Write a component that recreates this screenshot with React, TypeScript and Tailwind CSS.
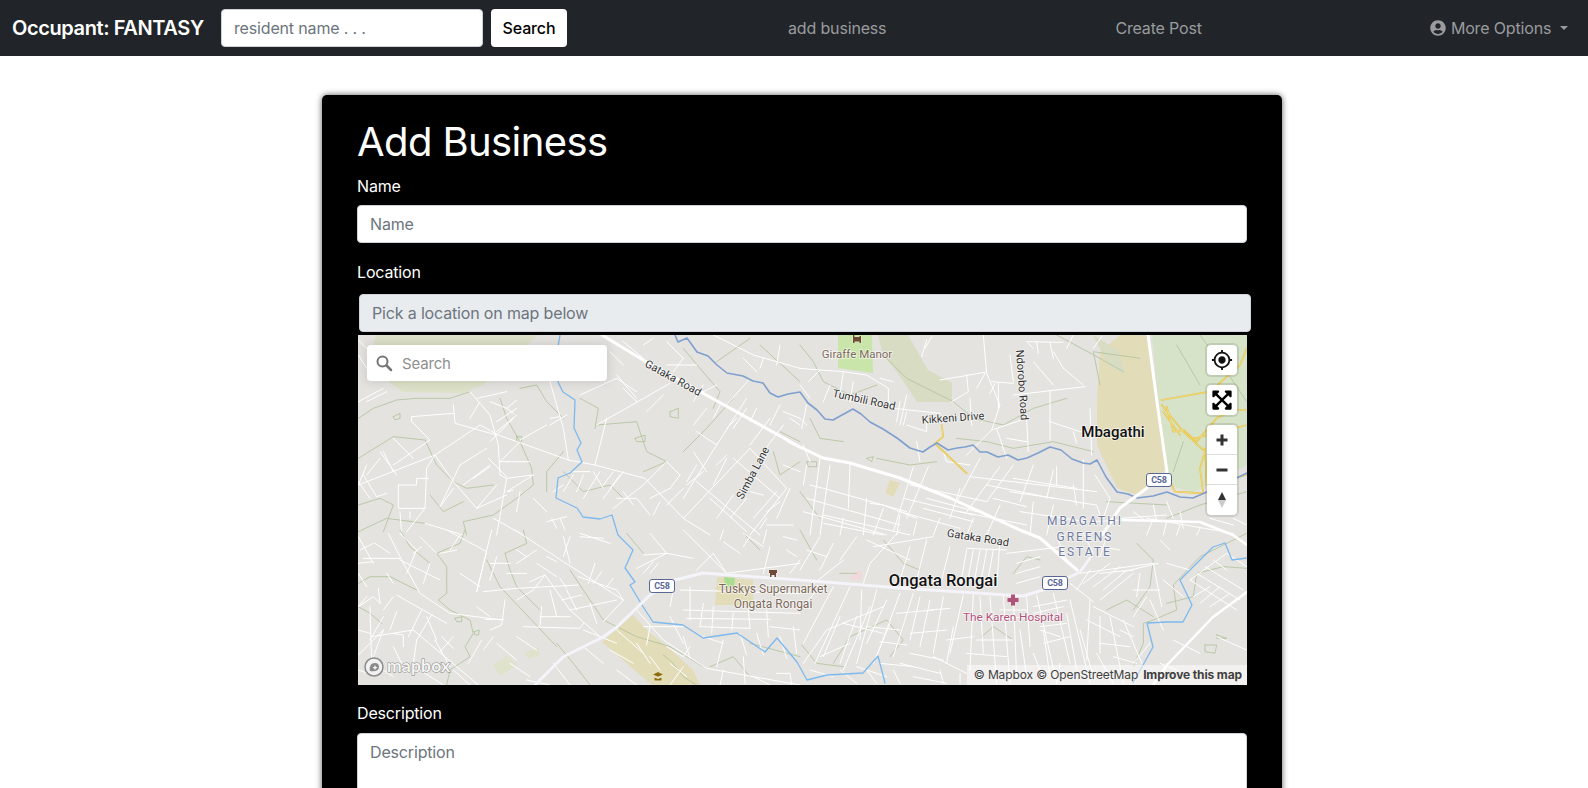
import { FaExpandArrowsAlt, FaUserCircle } from "react-icons/fa";
import { MdMyLocation } from "react-icons/md";

const q1Streets = ["25,600 255,510 390,420 445,450 655,525 735,540 885,580 1000,700 1080,750","310,360 315,415 440,450","185,395 310,385","185,395 185,410 240,465 130,540","360,320 420,390 445,480 450,570 470,580 550,570","470,580 440,750","340,600 420,540","330,540 410,490","370,580 420,545","415,520 470,575","600,290 640,430 655,525","735,540 770,400","740,420 960,295","690,330 800,280 860,320","820,310 860,350","800,270 860,340","1040,440 1100,480 1190,340","1100,480 1000,640","1130,520 1090,600","1000,700 1200,490 1310,610 1200,750","1040,590 1230,750","1080,640 1190,740","1150,520 1290,640","1090,150 1210,210 1350,250","1290,180 1280,240","1240,220 1230,250","1180,220 1220,260","90,500 140,570","130,460 190,520","40,570 80,635 110,625","145,600 145,670 225,670 230,550","145,600 200,600 200,580 235,580","25,350 100,310","50,350 110,320","225,715 340,750","430,700 520,750","550,640 590,680","590,710 650,695","605,700 620,730","630,700 645,735","700,640 750,560","760,600 790,560","780,610 810,570","800,640 860,640 900,690","820,620 850,660","790,670 880,600","600,420 650,390","510,465 590,420","450,530 540,530","475,620 490,615","270,665 330,540","275,660 310,610","150,680 155,750","180,680 180,700","25,165 60,200","25,210 50,250","880,180 910,160","780,200 820,240","950,240 1040,240","1040,330 1100,300","1030,420 1070,370","1190,370 1150,430","1220,370 1200,410","1290,360 1260,420","1320,400 1350,420","470,370 500,345","440,410 500,370","600,400 630,395","660,260 700,200","1100,540 1130,510","1200,620 1240,630","1250,680 1290,650",
"25,600 50,540","50,570 90,520","100,500 130,560","25,590 60,640","225,670 170,740","230,550 255,510","255,510 310,590","310,590 380,670 440,600","380,670 470,630","470,620 550,570","450,530 510,470","420,470 490,400","440,440 500,390","360,400 390,350","380,340 470,320","420,350 470,370","470,370 490,385","510,620 500,680","610,620 640,600","670,570 640,620","660,560 720,560","700,570 680,620","730,560 760,610","820,560 760,640","880,600 950,530","950,530 990,570","990,570 960,610","900,640 960,610","910,690 930,650","950,660 1000,610","1010,600 1060,560","1070,560 1030,500","1040,540 1010,590","1130,430 1160,400","1090,400 1110,360","1030,350 1060,300","1130,360 1200,280","1300,380 1350,400","1240,500 1300,420","1200,480 1260,400","1310,470 1350,490","1300,540 1350,560","1320,610 1280,700","1250,720 1330,720","1100,700 1150,630","1140,700 1190,640","1210,700 1280,620","1230,730 1250,700","890,380 940,330","700,200 740,240","950,170 1000,220","1000,220 970,260","820,170 880,220"];
const q1Contours = ["25,400 70,370 140,345 200,340 300,340 360,320","25,520 130,455 225,465 260,540 310,590 350,610 430,600","450,340 470,400 510,470 545,550 550,600 500,640 430,690 340,710 350,750","510,310 560,300 590,350 640,400","690,340 745,370 735,430","740,420 860,410 890,500 950,530 880,560","25,740 110,700 225,715","1000,190 1050,250 1110,320 1090,370","1200,160 1100,230","1230,180 1350,290","1270,500 1290,570 1350,530","1150,340 1070,430 1000,500","640,560 700,620 780,600 820,640","960,380 985,370 985,400 960,395 960,380","855,460 885,450 885,470 860,470 855,460","130,395 150,385 150,400 135,405 130,395","25,660 90,640 130,660 100,740","240,630 280,680 340,650","590,620 590,560 640,500","500,455 515,455 515,470 500,470 500,455","1290,440 1350,470"];

const q2Streets = ["0,250 60,255 130,260 200,270 265,310 265,350 280,370 420,385","550,150 560,265 600,360 575,435 500,510","420,285 555,262","500,270 505,320 455,350","575,290 640,295","595,295 595,370","530,310 555,265","570,325 585,295","640,330 855,305","750,318 750,465","510,340 515,420","680,405 685,500","575,435 680,400","750,410 840,440 870,435","820,440 830,475","870,370 875,510","380,165 365,215","395,155 375,190","680,170 790,172","710,172 715,205","750,172 760,220","685,175 700,190","880,190 905,155","510,575 890,620","340,545 280,740","385,545 320,700","480,610 450,700","540,520 470,650","600,545 500,680","640,540 560,650","700,540 660,650","760,555 740,640","770,545 770,600","850,525 850,670","820,600 830,660","60,520 30,750","90,540 60,750","20,540 10,600","150,540 145,670","70,690 330,750","70,715 250,750","210,655 250,660 350,700","380,640 530,680","370,670 520,710","580,640 680,665","820,650 890,660 900,690","885,570 930,640 910,700","300,350 290,410","320,330 300,420","20,360 5,430","240,280 280,290","1040,700 1300,745","1060,660 1070,710","1100,650 1120,700","1140,680 1150,730",
"30,600 70,610 320,680","20,640 300,720","10,680 260,750","330,600 560,650","310,640 520,690","300,680 480,730","480,680 680,720","560,600 760,640","640,580 830,610","630,620 830,650","660,680 860,710","700,650 690,750","760,660 740,750","600,660 560,750","520,700 500,750","420,700 400,750","350,710 340,750","200,640 190,750","250,670 220,750","300,690 290,750","130,700 120,750","0,300 30,340","25,290 60,255","130,260 120,330","160,290 150,350","70,350 90,300","0,400 20,420","320,380 310,420","320,420 380,440 380,390","10,480 30,530","350,470 360,530","430,500 440,530","440,530 510,540","590,430 620,520","620,460 680,470","760,200 790,250","700,230 760,300","790,250 850,300","630,210 640,290","820,150 800,190","960,700 1100,690","880,710 970,705","1000,680 1040,710","1230,700 1300,720","1300,700 1340,720","1060,700 1040,750","1100,710 1090,750","1140,720 1130,750","1200,730 1190,750"];
const q2Contours = ["0,180 40,230 70,290 150,330 230,300","250,210 320,280 420,330 460,350 520,400 610,420 700,370 800,340","470,460 560,470 640,490 760,470 880,500","410,530 330,540 230,520","900,300 880,200 1020,220","770,150 900,220 970,260","1200,150 1280,260 1340,350","1100,700 1200,660 1340,620","920,650 1100,660","0,620 60,700","30,400 60,460 130,470","200,520 220,515 215,530 200,520","20,530 50,530 50,545 25,545 20,530","1130,180 1200,300","1150,470 1120,560"];
const q2Yellow = ["425,420 430,455 405,475 500,565","1085,345 1230,320 1320,240 1340,190","1085,360 1150,440 1215,500 1200,550 1210,625 1125,620 1110,590","1100,365 1120,440 1150,435 1190,470 1250,400 1300,375 1340,375","1185,460 1340,420","1215,490 1220,600 1340,570","1090,380 1140,450"];

const q3Streets = ["25,20 70,100","115,10 155,90 210,190 300,250 455,270","150,90 270,150","290,0 410,65 380,185","425,0 380,185","495,0 640,95 820,210 760,275","400,185 500,175 685,165","500,210 550,180 585,135 660,240 750,320","540,155 585,135","465,210 455,285 420,300","405,268 460,268","520,290 690,295 700,280","575,230 570,290","570,260 660,260","660,240 800,210","635,210 695,195","630,145 650,175","685,140 800,180 820,210","735,100 715,160","755,125 730,160","790,145 770,170","640,20 660,100","660,20 640,80","690,10 780,40","690,20 760,25","590,80 620,95","140,195 290,280","215,240 175,320","245,255 200,330 190,400","65,320 190,300","25,230 70,200 90,220","85,175 90,220","60,230 65,400","125,310 160,315 160,350","20,380 100,300","190,300 385,465","310,320 270,365","275,320 310,355","395,330 355,400","430,320 400,360","530,450 600,465","610,400 660,465","40,85 150,85","25,100 70,95","900,10 950,70 1030,85","880,75 950,70","860,115 950,70","880,130 910,95","900,130 925,100","1000,0 1130,130","1120,35 1170,70","1090,70 1130,130 1350,100","1200,20 1180,50","1260,50 1240,130","1300,20 1340,30","970,180 960,230","990,180 1350,190","1020,170 1020,270","1060,220 1050,290","1000,240 1350,250","1010,265 1260,268","1050,290 1200,295","1090,230 1085,310","1150,250 1145,300","1195,240 1200,295","1250,240 1255,320","1260,290 1350,300","860,240 940,330 1070,415 1350,465","1180,380 1185,460","950,350 1000,380 1020,350","1280,430 1320,430 1325,465","1000,320 1020,385","240,100 220,160","190,70 215,50","330,130 390,170","1180,10 1240,50","75,40 120,70",
"25,130 50,170","30,60 70,40","110,130 130,160","50,200 25,230","100,240 130,200","100,260 60,330","140,245 120,300","25,300 60,310","25,420 55,430","100,300 70,380","130,350 170,430","70,400 130,440","230,260 260,330","255,330 300,410","310,420 360,465","210,420 280,465","150,10 200,60","200,60 170,130","210,20 260,70","330,15 300,60","440,80 420,150","500,100 560,60","500,60 530,80","560,100 620,140","380,230 420,260","420,100 480,100","470,130 530,130","600,180 620,260","650,180 680,240","720,220 740,280","700,300 800,340","800,300 880,370","880,290 1000,290","900,290 890,345","960,260 1000,340","1060,320 1120,340","1120,330 1100,410","1170,310 1190,375","1220,310 1240,375","1290,320 1310,385","1330,290 1340,370","1120,0 1110,30","1250,0 1240,40","1310,60 1340,80","1000,410 960,465","1120,420 1110,465","1210,440 1260,465","860,340 900,400","780,360 850,400","700,350 760,400","800,420 860,465","900,380 930,420","960,400 1010,440","500,320 560,360","440,340 500,390","480,400 540,440","270,70 320,60","1320,130 1350,90","1040,120 1090,70"];
const q3Contours = ["345,0 330,40 260,70 290,110 290,190 265,210 300,240 360,270 370,310 345,350 360,380 300,420 290,465","150,0 180,50 240,100","25,160 60,140 120,140 200,180","25,230 60,250 95,280","465,70 530,40 520,0","465,70 480,120 500,170 570,240","660,120 700,180 760,270 860,320 960,350 1060,410","620,340 670,400 720,465","1080,410 1150,380 1200,440","1200,340 1350,380","830,10 880,70","410,90 450,170 620,350","1180,10 1230,60","315,265 335,260 335,275 320,275 315,265","372,305 388,300 385,315 375,315 372,305","940,375 965,395 1000,440 1040,465"];

const q4Streets = ["150,170 45,400","100,170 10,340","60,170 0,240","185,180 180,330","230,180 170,400","300,190 230,380","340,190 280,380","430,200 400,370","490,195 450,370","520,190 510,420","570,200 590,460","610,200 630,460","680,200 690,350","710,195 770,460","760,190 810,400","810,210 870,460","870,210 860,390","930,260 970,460","900,260 900,370","240,335 320,345","330,370 430,390","400,380 500,430","290,250 400,240","390,240 450,235","440,330 520,320","700,370 720,420","780,400 770,460","890,370 940,460","300,0 210,100 190,160","200,30 330,90","220,50 400,20","60,20 0,120","330,50 300,150","380,30 350,150","450,50 420,170","500,60 480,170","520,60 500,170","540,60 520,170","560,60 540,170","580,60 560,170","600,30 590,170","500,55 620,60","620,70 790,50","650,100 720,80","650,130 720,110","650,160 720,140","840,130 1060,100","870,120 830,180","900,130 1000,120","810,160 880,215","850,160 930,100","880,170 960,110","910,180 980,120","900,210 1000,130","970,125 1075,100","1000,180 1080,180","1020,130 1010,200","1060,100 1085,230","1000,260 1040,200","1170,150 1310,240","1190,130 1320,210","1215,110 1330,180","1240,90 1280,120","1180,200 1230,170","1200,220 1260,170","1230,230 1290,190","1170,150 1280,70 1340,110","250,230 80,300 10,400","130,280 250,310","60,380 150,340","300,400 420,430","170,410 260,440","340,440 440,460","1080,400 1130,420","960,300 1000,320","1050,340 1000,400","720,300 780,320",
"120,260 70,380","170,260 120,400","210,230 130,420","260,210 200,340","270,280 220,400","360,200 330,330","390,210 360,350","460,290 440,400","540,200 550,370","640,200 650,440","660,300 680,440","730,300 750,440","800,250 830,420","840,300 880,440","970,270 1030,410","880,230 1000,290","860,270 960,320","900,340 990,350","940,380 1010,400","330,310 440,300","200,290 300,300","240,400 340,410","500,370 620,380","530,330 640,330","560,270 680,260","600,240 680,240","700,250 790,230","720,290 800,280","730,340 810,320","700,230 800,210","20,60 80,80","100,40 60,120","130,90 30,170","170,20 120,90","30,420 100,440","120,420 170,460","200,420 230,460","280,420 300,460","420,420 430,460","480,430 480,460","850,10 880,70","920,20 900,80","1080,30 1110,60","1100,100 1170,120","1090,150 1150,200","1050,210 1090,300","1120,330 1200,370","1250,320 1340,360","900,50 960,60","770,20 800,90"];
const q4Contours = ["1000,410 1030,340 1030,280 1060,270 1130,240 1120,165 1200,80 1340,10","1100,220 1180,200 1190,130 1270,110 1340,115","920,240 980,210 1060,260","545,320 580,290 640,330","100,400 150,320 260,270 310,330 270,380","0,0 50,90","640,130 680,80 720,90","170,130 120,130","1010,40 1060,90 1050,170 1000,240","5,345 50,400 130,410","1215,345 1250,345 1245,370 1215,365 1215,345","1250,315 1280,325 1250,325 1250,315","250,30 310,100 360,120"];

const Lines = ({ items, color, width }: { items: string[]; color: string; width: number }) => (
  <g fill="none" stroke={color} strokeWidth={width} strokeLinejoin="round" strokeLinecap="round">
    {items.map((p, i) => <polyline key={i} points={p} />)}
  </g>
);

const Label = ({ x, y, r = 0, size = 11, fill = "#333", weight = 400, spacing = 0, children }: { x: number; y: number; r?: number; size?: number; fill?: string; weight?: number; spacing?: number; children: string }) => (
  <text x={0} y={0} transform={`translate(${x} ${y}) rotate(${r})`} textAnchor="middle" dominantBaseline="central" fontSize={size} fontWeight={weight} fill={fill} letterSpacing={spacing} stroke="#fff" strokeOpacity={0.7} strokeWidth={1.6} paintOrder="stroke" fontFamily="Roboto, sans-serif">{children}</text>
);

const Shield = ({ x, y }: { x: number; y: number }) => (
  <g transform={`translate(${x} ${y})`}>
    <rect x={-12.5} y={-6.5} width={25} height={13} rx={2.5} fill="#fff" stroke="#5a6796" strokeWidth={1} />
    <text textAnchor="middle" dominantBaseline="central" fontSize={9} fontWeight={700} fill="#5a6796" fontFamily="Roboto, sans-serif">C58</text>
  </g>
);

const GX = 1 / 3;

function MapCanvas() {
  return (
    <svg width={889} height={350} viewBox="0 0 889 350" className="absolute inset-0 block">
      <rect width={889} height={350} fill="#e4e3df" />
      <polygon points="18,0 180,0 125,50 105,58 45,57 28,45 14,12" fill="#dde1c8" />
      <polygon points="520,0 550,0 570,35 594,48 594,67 559,67 539,37 525,20" fill="#d8dcc3" />
      <polygon points="480,0 514,0 515,38 480,33" fill="#c9e5a9" />
      <polygon points="794,0 889,0 889,130 835,158 812,150 800,70" fill="#d6e3c8" />
      <polygon points="762,0 789,0 804,83 809,133 779,160 759,153 739,110 739,67 742,17" fill="#e3dcb8" />
      <polygon points="735,0 760,15 768,40 750,30" fill="#d8dcc3" />
      <polygon points="275,280 244,307 294,350 342,350 335,335 310,312 292,298" fill="#e3dcb8" />
      <polygon points="359,242 395,245 395,270 357,270" fill="#e3dcb8" />
      <polygon points="366,242 377,243 376,252 367,252" fill="#a9dd8f" />
      <polygon points="492,242 497,237 504,236 504,244 494,245" fill="#f0d8dc" />
      <polygon points="532,145 542,148 535,162 527,158" fill="#e3dcb8" />
      <polygon points="135,330 149,321 159,330 142,341" fill="#dfe3cb" />
      <polygon points="167,317 180,313 182,320 170,324" fill="#dfe3cb" />

      <g transform={`translate(-8 -50) scale(${GX})`}>
        <Lines items={q1Contours} color="#b4c4a0" width={2.6} />
        <Lines items={q1Streets} color="#fff" width={3} />
      </g>
      <g transform={`translate(442 -50) scale(${GX})`}>
        <Lines items={q2Contours} color="#b4c4a0" width={2.6} />
        <Lines items={q2Streets} color="#fff" width={3} />
        <Lines items={q2Yellow} color="#e6bf30" width={5} />
        <Lines items={q2Yellow} color="#fff" width={1.2} />
      </g>
      <g transform={`translate(-8 195) scale(${GX})`}>
        <Lines items={q3Contours} color="#b4c4a0" width={2.6} />
        <Lines items={q3Streets} color="#fff" width={3} />
      </g>
      <g transform={`translate(442 195) scale(${GX})`}>
        <Lines items={q4Contours} color="#b4c4a0" width={2.6} />
        <Lines items={q4Streets} color="#fff" width={3} />
      </g>

      <g fill="none" strokeLinejoin="round" strokeLinecap="round" strokeWidth={1.3}>
        <polyline stroke="#7db9ee" points="202,0 200,12 200,47 205,57 217,65 216,93 223,108 219,115 224,127 212,138 200,143 198,163 219,173 225,182 242,184 254,180 260,200 275,215 267,233 277,247 272,250 284,270 295,287 325,290 345,303 379,298 407,317 419,303 439,327 449,345 469,340 505,338 520,321 527,348" />
        <polyline stroke="#7f9fcf" strokeWidth={1.6} points="317,0 320,7 329,3 339,17 350,21 359,30 369,38 385,41 395,46 405,48 412,58 420,62 430,59 442,57 450,68 459,75 467,84 475,85 484,80 495,74 503,79 512,87 525,94 539,103 552,113 565,117 572,112 579,108 590,115 599,113 607,112 615,110 622,117 629,117 640,122 650,120 660,125 669,123 680,118 692,112 703,115 714,124 725,128 732,129 739,125 748,142 759,157 770,159 779,163 795,161 809,157 822,162 835,163 860,152 889,138" />
        <polyline stroke="#7db9ee" points="775,348 795,312 789,288 809,287 825,287 834,270 822,245 855,212 867,208 874,225 889,223" />
      </g>

      <g fill="none" strokeLinejoin="round" strokeLinecap="round">
        <polyline stroke="#fff" strokeWidth={3} points="244,0 285,25 442,112 465,123 492,128 542,143 592,163 662,195 682,203 719,235" />
        <polyline stroke="#f4f4fa" strokeWidth={3} points="177,350 205,322 245,302 259,292 292,260 317,245 345,238 442,245 542,253 665,261 685,255 722,237 732,223" />
        <polyline stroke="#fff" strokeWidth={3} points="744,200 762,173 789,153" />
        <polyline stroke="#fff" strokeWidth={3} points="809,137 799,67 790,0" />
        <polyline stroke="#fff" strokeWidth={2.5} points="765,185 842,187 875,200 889,210" />
        <polyline stroke="#fff" strokeWidth={2.5} points="889,257 855,282 809,330 795,350" />
      </g>

      <Label x={315} y={43} r={29}>Gataka Road</Label>
      <Label x={499} y={19} size={11.5} fill="#7d6a5c">Giraffe Manor</Label>
      <Label x={506} y={65} r={12}>Tumbili Road</Label>
      <Label x={595} y={83} r={-4}>Kikkeni Drive</Label>
      <Label x={664} y={50} r={86}>Ndorobo Road</Label>
      <Label x={755} y={97} size={15} fill="#111" weight={500}>Mbagathi</Label>
      <Label x={727} y={186} size={12} fill="#6f7aa0" spacing={2}>MBAGATHI</Label>
      <Label x={727} y={202} size={12} fill="#6f7aa0" spacing={2}>GREENS</Label>
      <Label x={727} y={217} size={12} fill="#6f7aa0" spacing={2}>ESTATE</Label>
      <Label x={620} y={203} r={9}>Gataka Road</Label>
      <Label x={395} y={138} r={-62}>Simba Lane</Label>
      <Label x={585} y={245} size={16.500} fill="#111" weight={500}>Ongata Rongai</Label>
      <Label x={415} y={254} size={12} fill="#7d6a5c">Tuskys Supermarket</Label>
      <Label x={415} y={269} size={12} fill="#7d6a5c">Ongata Rongai</Label>
      <Label x={655} y={282} size={11.800} fill="#b0527a">The Karen Hospital</Label>

      <path d="M653 259.500h4v3.500h3.500v4h-3.500v3.500h-4v-3.500h-3.500v-4h3.500z" fill="#b0527a" />
      <Shield x={801} y={145} />
      <Shield x={304} y={251} />
      <Shield x={697} y={248} />

      <g fill="#6f4a37" stroke="#fff" strokeWidth={0.4} paintOrder="stroke">
        <path d="M411 235h8v3h-1v4h-1.500v-2h-3v2H412v-4h-1z" />
        <path d="M495 0h1.500v2h5v-1h1.500v7h-1.500v-1.500h-5V8H495z" />
      </g>
      <path d="M300 337l5 2.400-5 2.400-5-2.400z M296.500 342.500l3.500 1.600 3.500-1.600v3h-7z" fill="#8a6d0d" stroke="#fff" strokeWidth={0.4} paintOrder="stroke" />

      <g transform="translate(6 322)">
        <circle cx={10} cy={10} r={9} fill="#f2f2f2" stroke="#8a8a8a" strokeWidth={1.5} />
        <path d="M6 14c-1-3 0-8 5-8 3 0 4 2 4 4 0 4-5 5-9 4z" fill="#8a8a8a" />
        <path d="M11 8l.8 1.800 1.800.8-1.800.8-.8 1.800-.8-1.800-1.800-.8 1.800-.8z" fill="#f2f2f2" />
        <text x={23} y={15} fontSize={17.500} fontWeight={700} fill="#f4f4f4" stroke="#848484" strokeWidth={1} paintOrder="stroke" letterSpacing={0.2} fontFamily="Lato, sans-serif">mapbox</text>
      </g>
    </svg>
  );
}

function MapBlock() {
  return (
    <div className="relative ml-px h-[350px] w-[889px] overflow-hidden bg-[#e4e3df]">
      <MapCanvas />
      <div className="absolute left-[9px] top-[10px] flex h-9 w-60 items-center rounded bg-white shadow-[0_0_10px_2px_rgba(0,0,0,0.1)]">
        <svg width="20" height="20" viewBox="0 0 20 20" className="ml-[7px]" fill="none" stroke="#757575">
          <circle cx="8.500" cy="8.500" r="5" strokeWidth="2" />
          <path d="M12.500 12.500l4.500 4.500" strokeWidth="2.500" strokeLinecap="round" />
        </svg>
        <span className="ml-[8px] text-[15px] leading-none text-[#8f8f8f]">Search</span>
      </div>
      <div className="absolute left-[849px] top-[10px] flex h-[30px] w-[30px] items-center justify-center rounded bg-white shadow-[0_0_0_2px_rgba(0,0,0,0.1)]">
        <MdMyLocation size={22} color="#111" />
      </div>
      <div className="absolute left-[849px] top-[50px] flex h-[30px] w-[30px] items-center justify-center rounded bg-white shadow-[0_0_0_2px_rgba(0,0,0,0.1)]">
        <FaExpandArrowsAlt size={22} color="#000" />
      </div>
      <div className="absolute left-[849px] top-[90px] flex w-[30px] flex-col divide-y divide-[#ddd] rounded bg-white shadow-[0_0_0_2px_rgba(0,0,0,0.1)]">
        <div className="flex h-[30px] items-center justify-center">
          <svg width="14" height="14" viewBox="0 0 14 14"><path d="M5.500 1.500h3v4h4v3h-4v4h-3v-4h-4v-3h4z" fill="#333" /></svg>
        </div>
        <div className="flex h-[30px] items-center justify-center">
          <svg width="14" height="14" viewBox="0 0 14 14"><rect x="1.500" y="5.500" width="11" height="3" fill="#333" /></svg>
        </div>
        <div className="flex h-[30px] items-center justify-center">
          <svg width="12" height="20" viewBox="0 0 12 20"><path d="M6 2l4 8H2z" fill="#333" /><path d="M6 18l4-8H2z" fill="#ccc" /></svg>
        </div>
      </div>
      <div className="absolute bottom-0 right-0 flex h-5 w-[280px] items-center justify-end gap-[5px] bg-white/50 pr-[5px] text-[12px] leading-none tracking-[-0.01em] text-[#404040]">
        <span>© Mapbox © OpenStreetMap</span>
        <span className="font-bold">Improve this map</span>
      </div>
    </div>
  );
}

const fieldClass = "block h-[38px] rounded-[4px] border border-[#ced4da] px-3 text-base placeholder:text-[#6c757d] outline-none";

export default function App() {
  return (
    <div className="h-screen overflow-hidden bg-white font-['Inter',sans-serif] tracking-[-0.01em]">
      <nav className="flex h-14 items-center bg-[#212529] pl-3">
        <a className="w-[192px] whitespace-nowrap text-xl font-semibold leading-none tracking-[-0.02em] text-white">Occupant: FANTASY</a>
        <input placeholder="resident name . . ." className={`ml-[17px] w-[262px] bg-white ${fieldClass}`} />
        <button className="ml-2 h-[38px] w-[76px] rounded-[4px] bg-white text-base font-medium text-black">Search</button>
        <a className="ml-[221px] text-base text-[#9a9b9e]">add business</a>
        <a className="ml-[229px] text-base text-[#9a9b9e]">Create Post</a>
        <a className="ml-[228px] flex items-center text-base text-[#9a9b9e]">
          <FaUserCircle size={16} className="mr-[5px]" />
          More Options
          <span className="ml-[9px] h-0 w-0 border-x-[4.8px] border-t-[4.8px] border-x-transparent border-t-[#9a9b9e]" />
        </a>
      </nav>
      <main className="ml-[322px] mt-[39px] w-[960px] rounded-[5px] bg-black pl-[35px] pr-[35px] pt-[23px] text-white shadow-[0_0_6px_rgba(0,0,0,0.65)]">
        <h1 className="mb-2 text-[40px] font-normal leading-[48px] tracking-[-0.015em]">Add Business</h1>
        <label className="mb-[7px] block text-base leading-6">Name</label>
        <input placeholder="Name" className={`w-[890px] bg-white ${fieldClass}`} />
        <label className="mb-[10px] mt-[17px] block text-base leading-6">Location</label>
        <input disabled placeholder="Pick a location on map below" className={`ml-[2px] w-[892px] bg-[#e9ecef] ${fieldClass}`} />
        <div className="mt-[3px]">
          <MapBlock />
        </div>
        <label className="mb-2 mt-4 block text-base leading-6">Description</label>
        <textarea placeholder="Description" className="block h-[120px] w-[890px] resize-none rounded-[4px] border border-[#ced4da] bg-white px-3 py-1.5 text-base placeholder:text-[#6c757d] outline-none" />
      </main>
    </div>
  );
}
